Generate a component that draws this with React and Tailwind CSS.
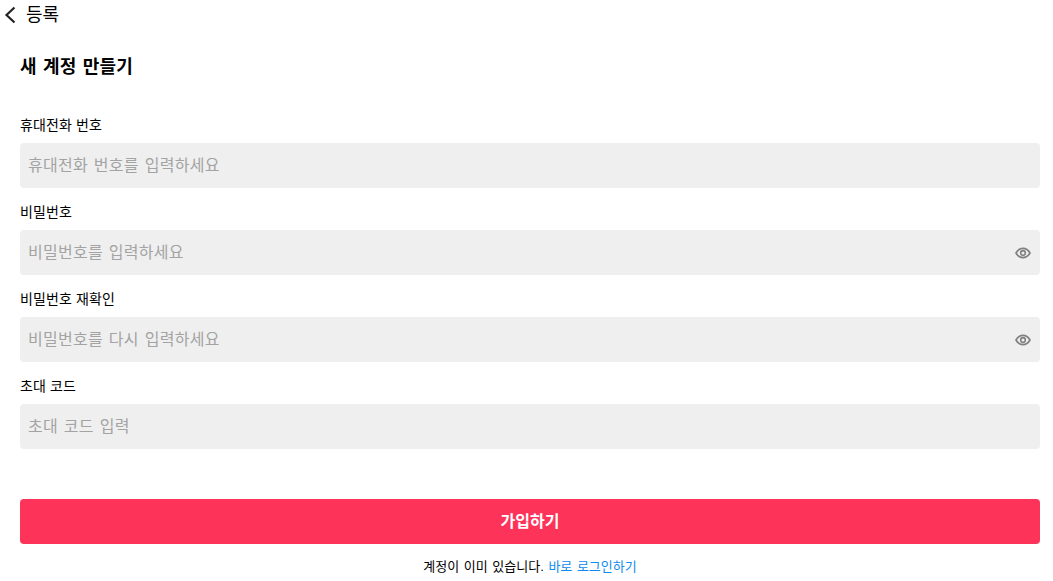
import React from "react";
const F = ({ label, ph, eye }) => (
  <div className="flex flex-col">
    <label className="text-[14px] leading-[20px] h-[20px] mt-[1px] mb-[8px] text-black tracking-[0.12px]">{label}</label>
    <div className="h-[45px] bg-[#efefef] rounded-[4px] flex items-center pl-2 pr-[9px]">
      <span className="flex-1 text-[16px] text-[#a3a3a3] tracking-[0.28px] [word-spacing:1.1px]">{ph}</span>
      {eye && (
        <svg width="16" height="16" viewBox="0 0 24 24" fill="none" stroke="#808080" strokeWidth="2.4">
          <path d="M1.5 12C4 7.5 7.7 5 12 5s8 2.5 10.500 7c-2.500 4.500-6.200 7-10.500 7s-8-2.500-10.500-7z" />
          <circle cx="12" cy="12" r="3.500" />
        </svg>
      )}
    </div>
  </div>
);
export default function App() {
  return (
    <div className="w-[1053px] h-[581px] bg-white overflow-hidden" style={{ fontFamily: '"Liberation Sans","Noto Sans CJK KR",sans-serif' }}>
      <div className="h-[30px] flex items-center pl-[4px] gap-[9px]">
        <svg width="13" height="18" viewBox="0 0 13 18" fill="none" stroke="#222" strokeWidth="2.200"><path d="M10.500 1.500L2.500 9l8 7.500" /></svg>
        <span className="text-[18px] text-black">등록</span>
      </div>
      <div className="px-5 pr-[13px]">
        <h1 className="mt-[22px] mb-[-2px] text-[18px] leading-[30px] font-bold text-black tracking-[0.2px] [word-spacing:1px]">새 계정 만들기</h1>
        <div className="mt-[34px] flex flex-col gap-[13px]">
          <F label="휴대전화 번호" ph="휴대전화 번호를 입력하세요" />
          <F label="비밀번호" ph="비밀번호를 입력하세요" eye />
          <F label="비밀번호 재확인" ph="비밀번호를 다시 입력하세요" eye />
          <F label="초대 코드" ph="초대 코드 입력" />
        </div>
        <button className="mt-[50px] w-full h-[45px] bg-[#fe335a] rounded-[4px] text-white font-bold text-[16px]">가입하기</button>
        <p className="mt-[15px] text-center text-[13px] leading-[16px] text-black [word-spacing:1px]">계정이 이미 있습니다. <span className="text-[#0d8bf0]">바로 로그인하기</span></p>
      </div>
    </div>
  );
}
